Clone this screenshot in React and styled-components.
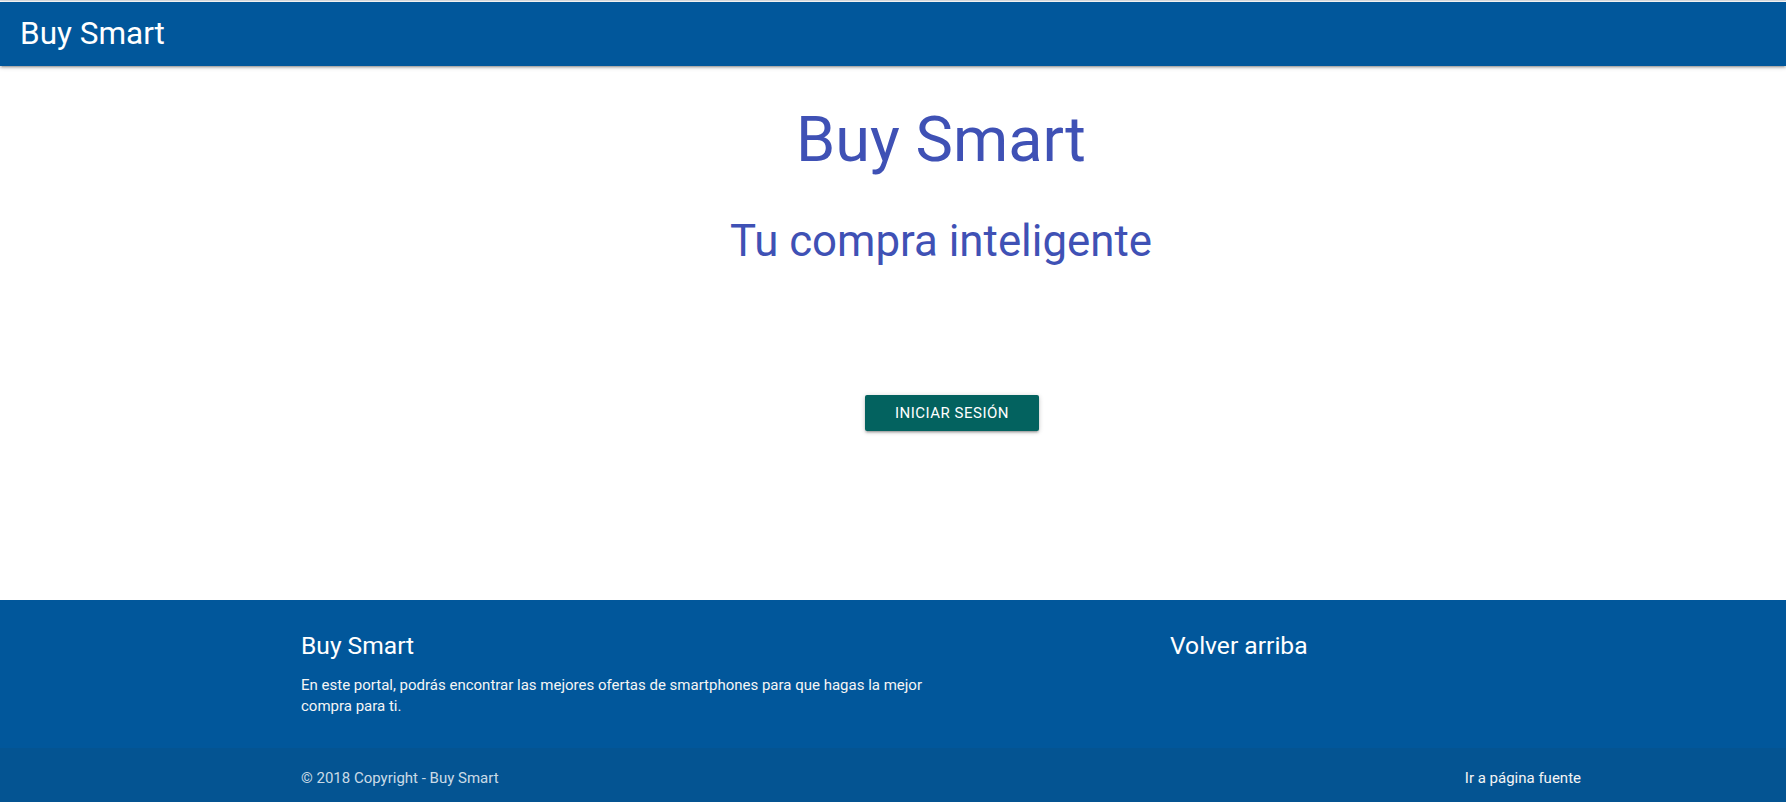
import React from "react";
import styled, { createGlobalStyle } from "styled-components";

const GlobalStyle = createGlobalStyle`
  html, body {
    margin: 0;
    padding: 0;
    background: #ffffff;
  }
  body {
    font-family: Roboto, "Liberation Sans", sans-serif;
    font-weight: 400;
    color: rgba(0, 0, 0, 0.87);
    line-height: 1.5;
  }
  * {
    box-sizing: border-box;
  }
`;

const Pagina = styled.div`
  padding-top: 2px;
  background: linear-gradient(#d9dde2 0, #d9dde2 1px, #ffffff 1px);
`;

const BarraNav = styled.nav`
  height: 64px;
  background: #01579b;
  display: flex;
  align-items: center;
  padding-left: 20px;
  position: relative;
  z-index: 2;
  box-shadow: 0 2px 2px 0 rgba(0, 0, 0, 0.14), 0 3px 1px -2px rgba(0, 0, 0, 0.12),
    0 1px 5px 0 rgba(0, 0, 0, 0.2);
`;

const Logo = styled.a`
  color: #ffffff;
  font-size: 31.5px;
  line-height: 64px;
  text-decoration: none;
`;

// el contenido está centrado algo a la derecha del centro de la ventana
const Principal = styled.main`
  display: flex;
  flex-direction: column;
  align-items: center;
  height: 534px;
  padding-left: 96px;
`;

const TituloGrande = styled.h1`
  margin: 39px 0 0;
  font-size: 63px;
  font-weight: 400;
  line-height: 1.1;
  color: #3f51b5;
`;

const Subtitulo = styled.h3`
  margin: 42.5px 0 0;
  font-size: 43.8px;
  font-weight: 400;
  line-height: 1.1;
  color: #3f51b5;
`;

const ZonaBoton = styled.div`
  margin-top: 130px;
  padding-left: 22px;
`;

const Boton = styled.button`
  height: 36px;
  line-height: 36px;
  padding: 0 30px;
  border: none;
  border-radius: 2px;
  background: #03625f;
  color: #ffffff;
  font-family: Roboto, "Liberation Sans", sans-serif;
  font-size: 15px;
  letter-spacing: 0.5px;
  text-transform: uppercase;
  cursor: pointer;
  box-shadow: 0 2px 2px 0 rgba(0, 0, 0, 0.14), 0 3px 1px -2px rgba(0, 0, 0, 0.12),
    0 1px 5px 0 rgba(0, 0, 0, 0.2);
`;

const PiePagina = styled.footer`
  background: #01579b;
  padding-top: 20px;
`;

const Contenedor = styled.div`
  width: 1280px;
  margin-left: 301px;
`;

const FilaPie = styled.div`
  display: grid;
  grid-template-columns: 640px 1fr;
  padding-bottom: 31px;
`;

const Columna = styled.div`
  padding-left: ${(props) => props.$sangria || "0px"};
  padding-right: 12px;
`;

const TituloPie = styled.h5`
  margin: 12.4px 0 0;
  font-size: 24.6px;
  font-weight: 400;
  line-height: 1.1;
  color: #ffffff;
`;

const TextoPie = styled.p`
  margin: 15.6px 0 0;
  font-size: 15px;
  line-height: 21px;
  color: #f5f5f5;
`;

const BandaCopyright = styled.div`
  height: 54px;
  padding-top: 6px;
  background: rgba(51, 51, 51, 0.08);
  display: flex;
  align-items: center;
`;

const FilaCopyright = styled(Contenedor)`
  display: flex;
  justify-content: space-between;
  font-size: 15px;
  line-height: 22.5px;
  color: rgba(255, 255, 255, 0.8);
`;

const EnlaceFuente = styled.a`
  color: #f5f5f5;
  text-decoration: none;
`;

export default function App() {
  return (
    <>
      <GlobalStyle />
      <Pagina>
        <BarraNav>
          <Logo href="#">Buy Smart</Logo>
        </BarraNav>

        <Principal>
          <TituloGrande>Buy Smart</TituloGrande>
          <Subtitulo>Tu compra inteligente</Subtitulo>
          <ZonaBoton>
            <Boton>Iniciar sesión</Boton>
          </ZonaBoton>
        </Principal>

        <PiePagina>
          <Contenedor>
            <FilaPie>
              <Columna>
                <TituloPie>Buy Smart</TituloPie>
                <TextoPie>
                  En este portal, podrás encontrar las mejores ofertas de smartphones para que hagas
                  la mejor compra para ti.
                </TextoPie>
              </Columna>
              <Columna $sangria="229px">
                <TituloPie>Volver arriba</TituloPie>
              </Columna>
            </FilaPie>
          </Contenedor>
          <BandaCopyright>
            <FilaCopyright>
              <span>© 2018 Copyright - Buy Smart</span>
              <EnlaceFuente href="#">Ir a página fuente</EnlaceFuente>
            </FilaCopyright>
          </BandaCopyright>
        </PiePagina>
      </Pagina>
    </>
  );
}
